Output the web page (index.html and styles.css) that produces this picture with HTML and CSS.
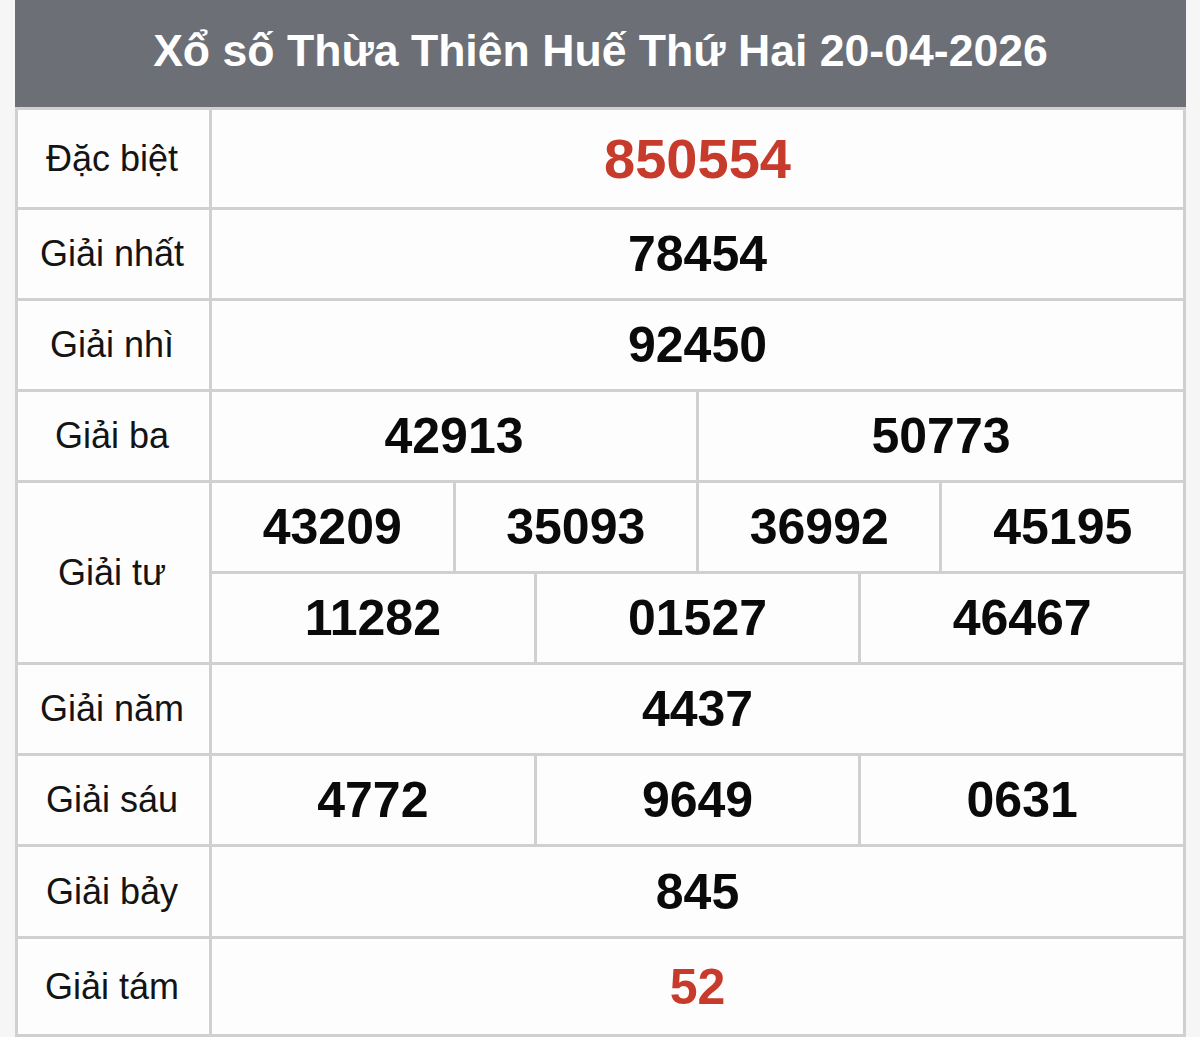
FILE: index.html
```html
<!DOCTYPE html>
<html lang="vi">
<head>
<meta charset="utf-8">
<title>Xổ số Thừa Thiên Huế</title>
<link rel="stylesheet" href="styles.css">
</head>
<body>
<div class="board">
  <div class="board-title">Xổ số Thừa Thiên Huế Thứ Hai 20-04-2026</div>
  <div class="results">
    <div class="label row-db">Đặc biệt</div>
    <div class="value num-special row-db">850554</div>

    <div class="label">Giải nhất</div>
    <div class="value">78454</div>

    <div class="label">Giải nhì</div>
    <div class="value">92450</div>

    <div class="label">Giải ba</div>
    <div class="multi">
      <div class="value span-6">42913</div>
      <div class="value span-6">50773</div>
    </div>

    <div class="label">Giải tư</div>
    <div class="multi">
      <div class="value span-3">43209</div>
      <div class="value span-3">35093</div>
      <div class="value span-3">36992</div>
      <div class="value span-3">45195</div>
      <div class="value span-4">11282</div>
      <div class="value span-4">01527</div>
      <div class="value span-4">46467</div>
    </div>

    <div class="label">Giải năm</div>
    <div class="value">4437</div>

    <div class="label">Giải sáu</div>
    <div class="multi">
      <div class="value span-4">4772</div>
      <div class="value span-4">9649</div>
      <div class="value span-4">0631</div>
    </div>

    <div class="label row-7">Giải bảy</div>
    <div class="value row-7">845</div>

    <div class="label row-last">Giải tám</div>
    <div class="value num-red row-last">52</div>
  </div>
</div>
</body>
</html>
```

FILE: styles.css
```css
html, body {
  margin: 0;
  padding: 0;
  background: #f6f6f6;
}

body {
  font-family: "Liberation Sans", Arial, sans-serif;
  color: #111;
}

.board {
  margin-left: 15px;
  width: 1171px;
}

.board-title {
  height: 107px;
  box-sizing: border-box;
  padding-bottom: 6px;
  background: #6c6f76;
  color: #fff;
  font-weight: bold;
  font-size: 44.6px;
  display: flex;
  align-items: center;
  justify-content: center;
  white-space: nowrap;
}

.results {
  display: grid;
  grid-template-columns: 191px 1fr;
  gap: 3px;
  padding: 3px;
  background: #d0d0d0;
}

.label,
.value {
  background: #fdfdfd;
  display: flex;
  align-items: center;
  justify-content: center;
  height: 88px;
}

.label {
  font-size: 36px;
  color: #141414;
  padding-right: 3px;
}

.value {
  font-size: 50px;
  font-weight: bold;
  color: #0a0a0a;
}

.label.row-db,
.value.row-db {
  height: 97px;
}

.label.row-7,
.value.row-7 {
  height: 89px;
}

.label.row-last,
.value.row-last {
  height: 95px;
}

.num-special {
  font-size: 56px;
  color: #c73b2c;
}

.num-red {
  color: #c73b2c;
}

.multi {
  display: grid;
  grid-template-columns: repeat(12, 1fr);
  gap: 3px;
  background: #d0d0d0;
}

.multi + .label {
  height: auto;
}

.span-3 { grid-column: span 3; }
.span-4 { grid-column: span 4; }
.span-6 { grid-column: span 6; }
```
